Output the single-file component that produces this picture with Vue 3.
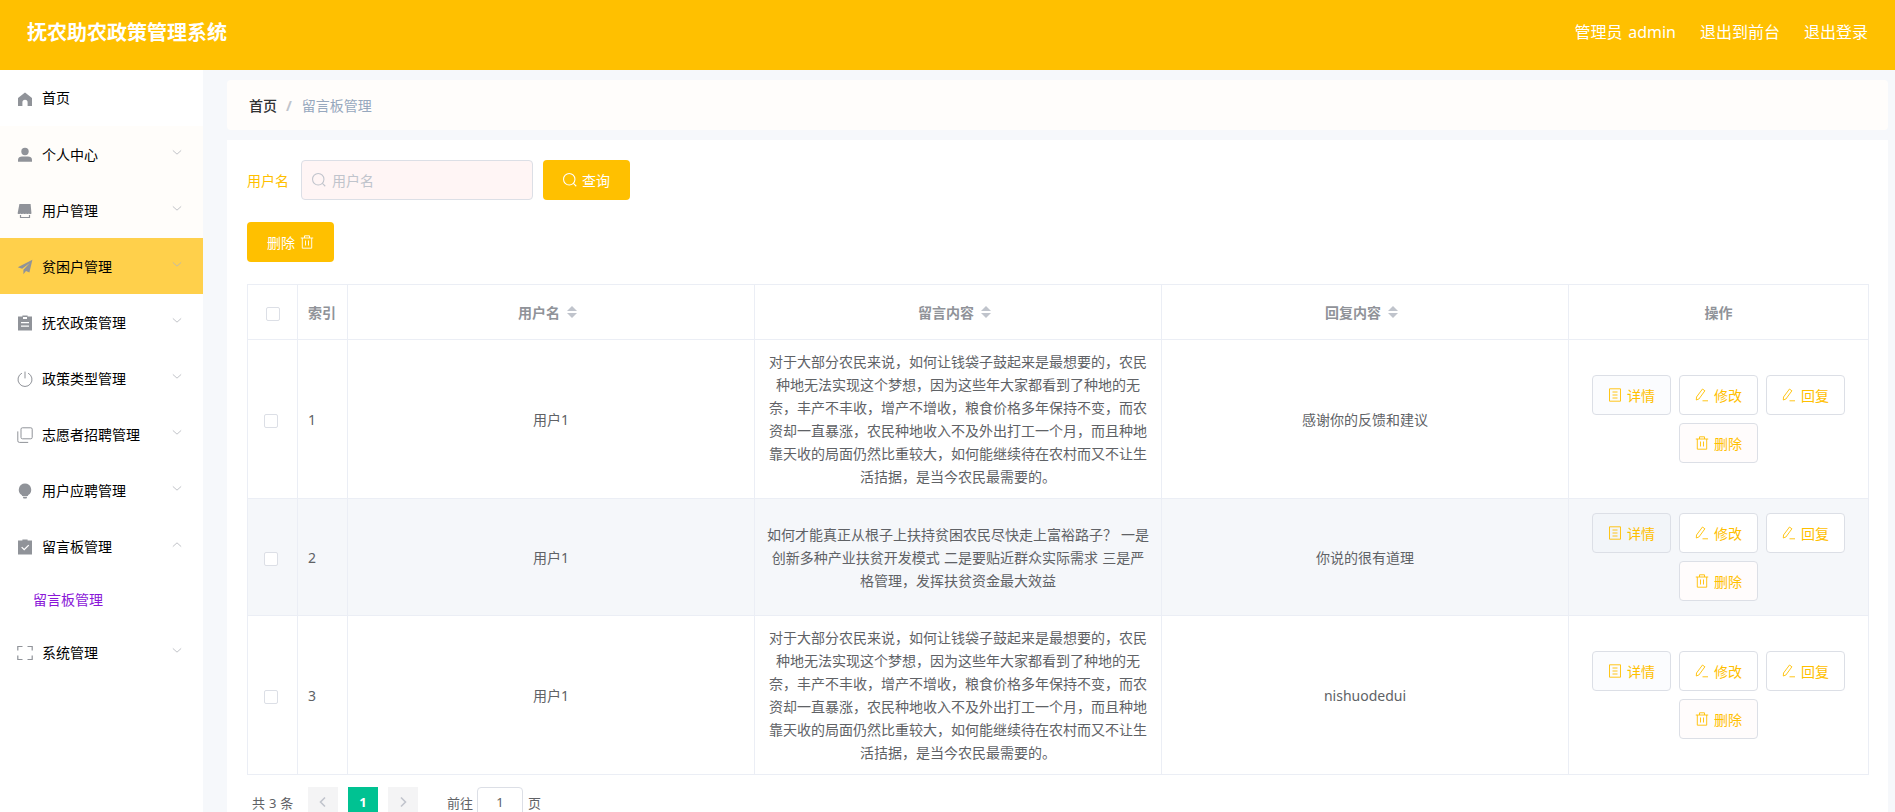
<script setup>
const menu = [
  { label: '首页', icon: 'home', noArrow: true },
  { label: '个人中心', icon: 'user', tint: true },
  { label: '用户管理', icon: 'shop', tint: true },
  { label: '贫困户管理', icon: 'plane', active: true },
  { label: '抚农政策管理', icon: 'order' },
  { label: '政策类型管理', icon: 'power' },
  { label: '志愿者招聘管理', icon: 'copy' },
  { label: '用户应聘管理', icon: 'bulb' },
  { label: '留言板管理', icon: 'claim', open: true },
  { label: '系统管理', icon: 'full' }
]
const iconPaths = {
  home: '<path fill="currentColor" d="M8 1.500 1 6.900V15h4.400v-3.600a2.600 2.600 0 0 1 5.200 0V15H15V6.900z"/>',
  user: '<circle fill="currentColor" cx="8" cy="4.500" r="3.700"/><path fill="currentColor" d="M1 14.800v-2C1 10.600 3 9.600 5 9.600h6c2 0 4 1 4 3.200v2z"/>',
  shop: '<path fill="currentColor" d="M2.400 1h11.200l.9 9.400c-.9.700-1.800.700-2.600 0-.8.700-2 .700-2.900 0-.8.700-2 .700-2.900 0-.8.700-2 .700-2.900 0-.7.700-1.700.700-2.600 0z"/><path fill="none" stroke="currentColor" stroke-width="1.200" d="M3.500 12v2.500h9V12"/>',
  plane: '<path fill="currentColor" d="M15.400.8.800 8.200l4.400 1.600L12.800 4 6.400 10.800v4.400l2.600-3.200 3.400 1.400z"/>',
  order: '<path fill="currentColor" d="M5.400 1.500V.5h5.200v1H15v14H1v-14zM6 2v2h4V2zM4 7v1.300h8V7zm0 3.400v1.300h8v-1.300z" fill-rule="evenodd"/>',
  power: '<path fill="none" stroke="currentColor" stroke-width="1" d="M8 .6v6.800M4.900 2.200a7 7 0 1 0 6.200 0"/>',
  copy: '<path fill="none" stroke="currentColor" stroke-width="1" d="M5.400 .8h8.400a1.400 1.400 0 0 1 1.400 1.400v8.200a1.400 1.400 0 0 1-1.400 1.400H5.400A1.400 1.400 0 0 1 4 10.400V2.200A1.400 1.400 0 0 1 5.400 .8zM.800 4.400v9.400a1.600 1.600 0 0 0 1.600 1.600h8.800"/>',
  bulb: '<path fill="currentColor" d="M8 .5a6.300 6.300 0 0 1 3.300 11.600L10.800 13H5.200l-.5-.9A6.300 6.300 0 0 1 8 .5zM5.800 13.800h4.400l-.7 1.800H6.500z"/>',
  claim: '<path fill="currentColor" fill-rule="evenodd" d="M5.400 1.500V.5h5.200v1H15v14H1v-14zM4.200 8.600l3 3 5-5-.9-.9-4.100 4.100-2.100-2.100z"/>',
  full: '<path fill="none" stroke="currentColor" stroke-width="1.200" d="M5.500 1.500H.8v4M10.500 1.500h4.700v4M5.500 14.500H.8v-4M10.500 14.500h4.700v-4"/>'
}
const long = '对于大部分农民来说，如何让钱袋子鼓起来是最想要的，农民种地无法实现这个梦想，因为这些年大家都看到了种地的无奈，丰产不丰收，增产不增收，粮食价格多年保持不变，而农资却一直暴涨，农民种地收入不及外出打工一个月，而且种地靠天收的局面仍然比重较大，如何能继续待在农村而又不让生活拮据，是当今农民最需要的。'
const rows = [
  { id: 1, user: '用户1', msg: long, reply: '感谢你的反馈和建议' },
  { id: 2, user: '用户1', msg: '如何才能真正从根子上扶持贫困农民尽快走上富裕路子？ 一是创新多种产业扶贫开发模式 二是要贴近群众实际需求 三是严格管理，发挥扶贫资金最大效益', reply: '你说的很有道理', hover: true },
  { id: 3, user: '用户1', msg: long, reply: 'nishuodedui' }
]
const actions = [
  { label: '详情', icon: 'doc', cls: 'a-detail' },
  { label: '修改', icon: 'edit', cls: '' },
  { label: '回复', icon: 'edit', cls: '' },
  { label: '删除', icon: 'trash', cls: 'a-del' }
]
const btnIcons = {
  doc: '<path fill="none" stroke="currentColor" stroke-width=".9" d="M1.500 .8h11v12.400h-11zM4.500 4h5M4.500 7h5M4.500 10h5"/>',
  edit: '<path fill="none" stroke="currentColor" stroke-width=".9" d="M1.500 9 7.500 1l2.400 1.800L3.900 11l-2.600 1zM7.500 12.800H13"/>',
  trash: '<path fill="none" stroke="currentColor" stroke-width=".9" d="M.8 3h12.400M4.500 3V.8h5V3M2.300 3v10.200h9.400V3M5.500 5.500v5M8.500 5.500v5"/>'
}
</script>

<template>
  <div class="page">
    <header class="top">
      <div class="title">抚农助农政策管理系统</div>
      <nav class="top-links">
        <span>管理员 admin</span>
        <span>退出到前台</span>
        <span>退出登录</span>
      </nav>
    </header>
    <div class="body">
      <aside class="side">
        <template v-for="m in menu" :key="m.label">
          <div class="mi" :class="{ active: m.active, tint: m.tint, home: m.noArrow }">
            <svg class="mi-icon" viewBox="0 0 16 16" v-html="iconPaths[m.icon]"></svg>
            <span class="mi-label">{{ m.label }}</span>
            <svg v-if="!m.noArrow" class="chev" :class="{ up: m.open }" viewBox="0 0 12 8"><path fill="none" stroke="currentColor" d="M1 1.500 6 6l5-4.500"/></svg>
          </div>
          <div v-if="m.open" class="sub">留言板管理</div>
        </template>
      </aside>
      <main class="main">
        <div class="crumb">
          <span class="c-home">首页</span>
          <span class="c-sep">/</span>
          <span class="c-cur">留言板管理</span>
        </div>
        <section class="card">
          <div class="search">
            <label class="s-label">用户名</label>
            <div class="s-input">
              <svg class="s-ico" viewBox="0.500 0.500 13 13"><circle cx="6.300" cy="6.300" r="5.300" fill="none" stroke="currentColor"/><path d="m10.200 10.200 2.600 2.600" stroke="currentColor"/></svg>
              <span>用户名</span>
            </div>
            <button class="primary">
              <svg class="b-ico" viewBox="0.500 0.500 13 13"><circle cx="6.300" cy="6.300" r="5.300" fill="none" stroke="currentColor"/><path d="m10.200 10.200 2.600 2.600" stroke="currentColor"/></svg>
              查询
            </button>
          </div>
          <div class="tools">
            <button class="primary">
              删除
              <svg class="b-ico" viewBox="0 0 14 14" v-html="btnIcons.trash"></svg>
            </button>
          </div>
          <table class="tbl">
            <colgroup>
              <col style="width:50px" /><col style="width:50px" /><col style="width:407px" /><col style="width:407px" /><col style="width:407px" /><col style="width:300px" />
            </colgroup>
            <thead>
              <tr>
                <th class="c"><i class="chk chk-h"></i></th>
                <th class="idx">索引</th>
                <th class="c"><span class="th-in">用户名<i class="sort"></i></span></th>
                <th class="c"><span class="th-in">留言内容<i class="sort"></i></span></th>
                <th class="c"><span class="th-in">回复内容<i class="sort"></i></span></th>
                <th class="c">操作</th>
              </tr>
            </thead>
            <tbody>
              <tr v-for="r in rows" :key="r.id" :class="{ hov: r.hover }">
                <td class="c"><i class="chk chk-b"></i></td>
                <td class="idx num">{{ r.id }}</td>
                <td class="c">{{ r.user }}</td>
                <td class="c msg">{{ r.msg }}</td>
                <td class="c">{{ r.reply }}</td>
                <td class="c act">
                  <div class="acts">
                    <button v-for="a in actions" :key="a.label" class="ghost" :class="a.cls">
                      <svg class="a-ico" viewBox="0 0 14 14" v-html="btnIcons[a.icon]"></svg>
                      {{ a.label }}
                    </button>
                  </div>
                </td>
              </tr>
            </tbody>
          </table>
          <div class="pager">
            <span class="p-total">共 3 条</span>
            <span class="p-btn"><svg viewBox="0 0 10 12"><path fill="none" stroke="currentColor" stroke-width="1.600" d="M7 1.500 2.500 6 7 10.500"/></svg></span>
            <span class="p-num">1</span>
            <span class="p-btn"><svg viewBox="0 0 10 12"><path fill="none" stroke="currentColor" stroke-width="1.600" d="M3 1.500 7.500 6 3 10.500"/></svg></span>
            <span class="p-goto">前往</span>
            <span class="p-input">1</span>
            <span class="p-page">页</span>
          </div>
        </section>
      </main>
    </div>
  </div>
</template>

<style>
html, body { margin: 0; height: 100%; overflow: hidden; }
</style>

<style scoped>
.page { width: 1895px; height: 812px; overflow: hidden; font-family: "Noto Sans", "Noto Sans CJK SC", sans-serif; font-size: 14px; color: #606266; background: #f6f8fb; }
.top { height: 70px; box-sizing: border-box; padding: 0 27px 8px; background: #ffc000; color: #fff; display: flex; align-items: center; justify-content: space-between; }
.title { font-size: 20px; font-weight: 700; }
.top-links { display: flex; gap: 24px; font-size: 16px; word-spacing: 1.400px; }
.body { display: flex; height: 742px; }
.side { width: 203px; flex: none; background: #fff; }
.mi { height: 56px; box-sizing: border-box; display: flex; align-items: center; padding: 0 21px 0 17px; color: #000; position: relative; }
.mi.tint { background: #fffdfa; }
.mi.active { background: #ffd04b; }
.mi-icon { width: 16px; height: 16px; color: #909399; flex: none; margin-top: 1px; }
.mi-label { margin-left: 9px; margin-top: 2px; flex: 1; line-height: 1; }
.mi.home .mi-label { margin-top: 0; }
.chev { width: 10px; height: 7px; color: #b4b7bd; margin-top: -3px; }
.chev.up { transform: rotate(180deg); }
.sub { height: 50px; display: flex; align-items: center; padding-left: 33px; color: #8a16d8; }
.main { flex: 1; min-width: 0; padding: 10px 7px 0 24px; display: flex; flex-direction: column; gap: 10px; }
.crumb { height: 50px; flex: none; background: #fffdfb; border-radius: 4px; display: flex; align-items: center; padding-left: 22px; }
.c-home { color: #303133; font-weight: 500; }
.c-sep { color: #c0c4cc; margin: 0 10px 0 9px; font-weight: 700; }
.c-cur { color: #97a8be; }
.card { flex: 1; background: #fff; padding: 20px; min-height: 0; }
.search { display: flex; align-items: center; height: 40px; }
.s-label { color: #ffc000; width: 54px; }
.s-input { width: 232px; height: 40px; box-sizing: border-box; background: #fff5f5; border: 1px solid #dcdfe6; border-radius: 4px; display: flex; align-items: center; padding-left: 10px; color: #c0c4cc; }
.s-ico { width: 14px; height: 14px; margin-right: 6px; }
.primary { height: 40px; width: 87px; border: 0; border-radius: 4px; background: #ffc000; color: #fff; font: inherit; display: inline-flex; align-items: center; justify-content: center; gap: 5px; padding: 0; }
.search .primary { margin-left: 10px; }
.b-ico { width: 14px; height: 14px; }
.tools { margin-top: 22px; height: 40px; }
.tbl { margin-top: 22px; width: 1621px; table-layout: fixed; border-collapse: collapse; border: 1px solid #ebeef5; }
.tbl th, .tbl td { border: 1px solid #ebeef5; padding: 10px 11px; box-sizing: border-box; }
.tbl th { height: 55px; padding: 0 10px; color: #909399; font-weight: 700; }
.tbl td { line-height: 23px; word-break: break-all; }
.c { text-align: center; }
.tbl .idx { text-align: left; padding-left: 10px; }
.msg { word-spacing: .500px; }
.hov td { background: #f5f7fa; }
.tbl td.act { padding: 14px 10px; }
.chk { display: inline-block; width: 14px; height: 14px; box-sizing: border-box; border: 1px solid #dcdfe6; border-radius: 2px; background: #fff; vertical-align: middle; }
.chk-b { margin-right: 4px; }
.th-in { display: inline-flex; align-items: center; margin-top: -3px; vertical-align: middle; }
.sort { display: inline-block; width: 10px; height: 12px; margin: 0 7px; position: relative; }
.sort::before, .sort::after { content: ""; position: absolute; left: 0; border-left: 5px solid transparent; border-right: 5px solid transparent; }
.sort::before { top: 0; border-bottom: 5px solid #c0c4cc; }
.sort::after { bottom: 0; border-top: 5px solid #c0c4cc; }
.acts { display: flex; flex-wrap: wrap; justify-content: center; gap: 8px; }
.ghost { width: 79px; height: 40px; box-sizing: border-box; border: 1px solid #dcdfe6; border-radius: 4px; background: #fff; color: #ffc000; font: inherit; display: inline-flex; align-items: center; justify-content: center; gap: 5px; padding: 0; }
.a-ico { width: 14px; height: 14px; }
.a-detail { background: #fbfcfe; }
.hov .a-detail { background: #f2f5f9; }
.a-del { background: #fffcfc; }
.pager { display: flex; align-items: center; height: 30px; margin-top: 12px; color: #606266; font-size: 13px; padding-left: 5px; word-spacing: .500px; }
.p-total { width: 56px; }
.p-btn, .p-num { width: 30px; height: 30px; display: flex; align-items: center; justify-content: center; }
.p-btn { background: #f4f4f5; color: #c0c4cc; }
.p-btn svg { width: 10px; height: 12px; }
.p-num { background: #00c292; color: #fff; font-weight: 700; margin: 0 10px; }
.p-goto { margin-left: 29px; }
.p-input { width: 46px; height: 30px; box-sizing: border-box; border: 1px solid #dcdfe6; border-radius: 4px; margin: 0 5px 0 4px; display: flex; align-items: center; justify-content: center; }
</style>
